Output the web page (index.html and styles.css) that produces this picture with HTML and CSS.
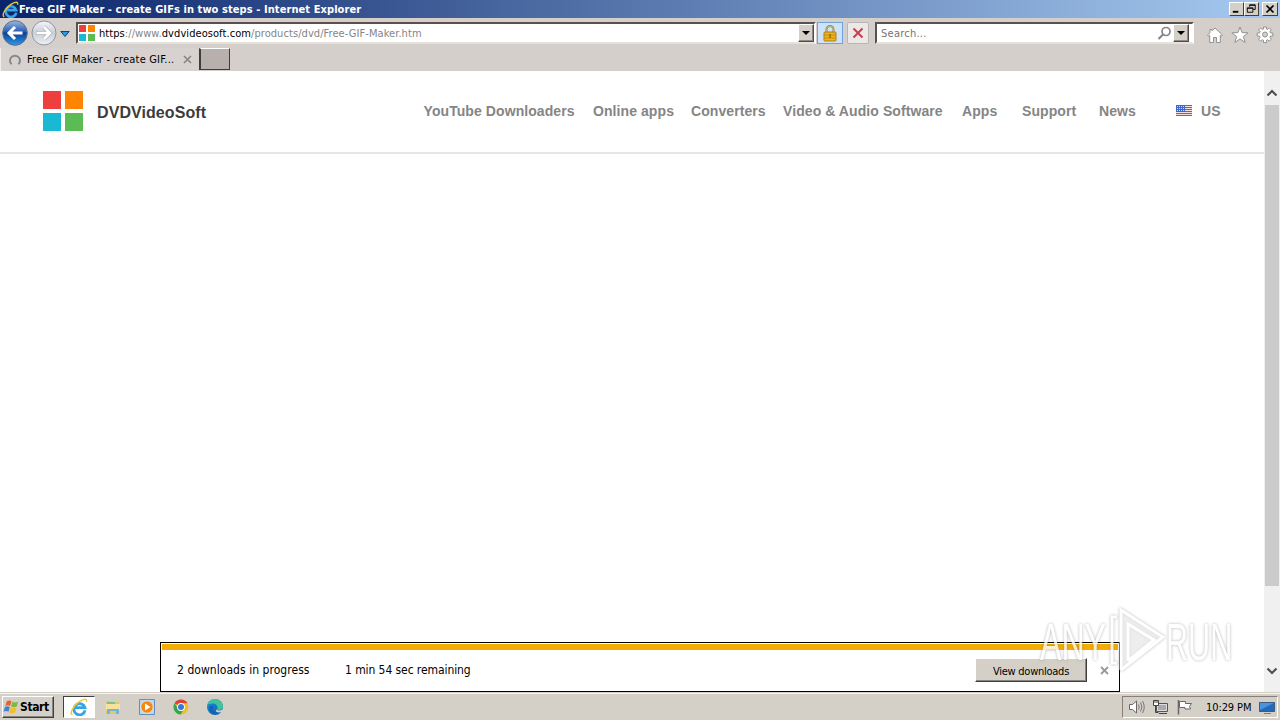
FILE: index.html
```html
<!DOCTYPE html>
<html lang="en">
<head>
<meta charset="utf-8">
<title>Free GIF Maker - create GIFs in two steps</title>
<link rel="stylesheet" href="styles.css">
</head>
<body>
<svg width="0" height="0" class="defs">
  <defs>
    <linearGradient id="blue" x1="0" y1="0" x2="0" y2="1"><stop offset="0" stop-color="#9db9df"/><stop offset=".42" stop-color="#2f63b5"/><stop offset=".5" stop-color="#0c3f98"/><stop offset="1" stop-color="#2f9be6"/></linearGradient>
    <linearGradient id="pale" x1="0" y1="0" x2="0" y2="1"><stop offset="0" stop-color="#f4f5f8"/><stop offset=".5" stop-color="#c9ced8"/><stop offset="1" stop-color="#eef1f5"/></linearGradient>
    <linearGradient id="edgeg" x1="0" y1="0" x2="1" y2="1"><stop offset="0" stop-color="#1c8fdc"/><stop offset="1" stop-color="#0b5cad"/></linearGradient>
    <symbol id="ie" viewBox="0 0 16 16">
      <path d="M13.400 11A5 5 0 1 1 13.300 8.600H5" fill="none" stroke="#38a4e4" stroke-width="2.500"/>
      <path d="M2.200 14.800C-.8 14.500 2.500 7.200 8 3.400 12.500.3 15.600.4 14.600 3.600" fill="none" stroke="#f3c52f" stroke-width="1.300"/>
    </symbol>
  </defs>
</svg>
<div class="window">
  <header class="titlebar">
    <svg class="title-icon" width="17" height="17"><use href="#ie"/></svg>
    <span class="title-text">Free GIF Maker - create GIFs in two steps - Internet Explorer</span>
    <div class="win-buttons">
      <svg class="wb" viewBox="0 0 14 12"><path d="M3 9h6" stroke="#000" stroke-width="2"/></svg>
      <svg class="wb" viewBox="0 0 14 12"><path d="M5 3.500v-2h6v5H9M5 2h6M2.500 5v4.500h6V5zM2 5h7" fill="none" stroke="#000"/></svg>
      <svg class="wb last" viewBox="0 0 14 12"><path d="M3.500 2.500l7 7m0-7l-7 7" stroke="#000" stroke-width="1.700"/></svg>
    </div>
  </header>

  <div class="toolbar">
    <svg class="back" width="26" height="26" viewBox="0 0 26 26"><circle cx="13" cy="13" r="12.300" fill="url(#blue)" stroke="#5b6f92"/><path d="M20.500 13H7m6-6l-6 6 6 6" fill="none" stroke="#fff" stroke-width="3"/></svg>
    <svg class="forward" width="26" height="26" viewBox="0 0 26 26"><circle cx="13" cy="13" r="12" fill="url(#pale)" stroke="#8e94a0"/><path d="M5 13h14m-6-6l6 6-6 6" fill="none" stroke="#aeb2ba" stroke-width="4"/><path d="M5.500 13H19m-6-6l6 6-6 6" fill="none" stroke="#fff" stroke-width="2.600"/></svg>
    <svg class="history" width="10" height="8" viewBox="0 0 10 8"><path d="M.8 1.500h8.400L5 6.500z" fill="#2b9be0" stroke="#17416f"/></svg>
    <div class="address">
      <div class="favicon"><i class="red"></i><i class="orange"></i><i class="cyan"></i><i class="green"></i></div>
      <span class="url"><b>https</b>://www.<b>dvdvideosoft.com</b>/products/dvd/Free-GIF-Maker.htm</span>
      <div class="drop"></div>
    </div>
    <div class="lock"><svg width="14" height="17" viewBox="0 0 14 17"><path d="M3.500 8V4.500a3.500 3.500 0 0 1 7 0V8" fill="none" stroke="#8d8147" stroke-width="2"/><path d="M3.500 7V4.500a3.500 3.500 0 0 1 7 0V7" fill="none" stroke="#d8cf9a" stroke-width=".7"/><rect x="1" y="7" width="12" height="9" rx="1" fill="#edb51c" stroke="#ae7c12"/><path d="M1.500 10h11m-11 3h11" stroke="#c78a0d"/><path d="M7 9v4" stroke="#875d08" stroke-width="1.200"/></svg></div>
    <div class="stop"><svg width="12" height="12" viewBox="0 0 12 12"><path d="M1.500 1.500L10.500 10.500M10.500 1.500L1.500 10.500" stroke="#c6424b" stroke-width="2"/></svg></div>
    <div class="search"><span>Search...</span>
      <svg width="15" height="15" viewBox="0 0 15 15"><circle cx="9" cy="5.500" r="4" fill="none" stroke="#85858a" stroke-width="1.700"/><path d="M6 8.500L1.500 13" stroke="#85858a" stroke-width="2.200"/></svg>
      <div class="drop"></div>
    </div>
    <div class="tools">
      <svg width="18" height="18" viewBox="0 0 18 18"><path d="M9 2l7.500 7-1 1.200-1.200-1V16.500h-3.800v-5h-3v5H3.700V9.200l-1.200 1L1.500 9 4 6.700V3.500h2v1.300z" fill="#fff" stroke="#929292"/></svg>
      <svg width="18" height="18" viewBox="0 0 18 18"><path d="M9 1l2.100 5.600 6 .2-4.700 3.700 1.700 5.900L9 13l-5.100 3.400 1.700-5.900L.9 6.800l6-.2z" fill="#fff" stroke="#929292"/></svg>
      <svg width="18" height="18" viewBox="0 0 18 18"><path d="M7.500 1h3v2l1.200.5 1.600-1.600 2 2L13.900 5.600l.6 1.400h2.300v3h-2.300l-.6 1.500 1.500 1.600-2.100 2.100-1.600-1.500-1.200.6v2.300h-3v-2.300l-1.300-.6-1.600 1.500-2-2.100L4.100 11.500 3.500 10H1.200V7h2.300l.6-1.400-1.500-1.700 2-2 1.600 1.600L7.500 3z" fill="#fff" stroke="#929292"/><circle cx="9" cy="8.500" r="2.500" fill="#d4d0c8" stroke="#929292"/></svg>
    </div>
  </div>

  <div class="tabs">
    <div class="tab">
      <svg width="14" height="14" viewBox="0 0 14 14"><path d="M3.600 11.300A5 5 0 1 1 10.400 11.300" fill="none" stroke="#888" stroke-width="2"/></svg>
      <span>Free GIF Maker - create GIF...</span>
      <svg width="9" height="9" viewBox="0 0 9 9"><path d="M1 1l7 7m0-7L1 8" stroke="#858585" stroke-width="1.600"/></svg>
    </div>
    <div class="new-tab"></div>
  </div>

  <div class="viewport">
    <main class="page">
      <div class="site-header">
        <div class="logo"><i class="red"></i><i class="orange"></i><i class="cyan"></i><i class="green"></i></div>
        <span class="brand">DVDVideoSoft</span>
        <nav>
          <a>YouTube Downloaders</a><a>Online apps</a><a>Converters</a><a>Video &amp; Audio Software</a><a>Apps</a><a>Support</a><a>News</a>
          <svg class="flag" width="16" height="11" viewBox="0 0 16 11"><path fill="#f4dede" d="M0 0h16v11H0z"/><path d="M8 .5h8M8 2.500h8M8 4.500h8M0 6.500h16M0 8.500h16M0 10.500h16" stroke="#d3453b" stroke-width="1.100"/><path fill="#3b68c9" d="M0 0h9v7H0z"/><path d="M1 1.500h8M1 3.500h8M1 5.500h8" stroke="#cfdcff" stroke-dasharray="1 1"/></svg>
          <a>US</a>
        </nav>
      </div>
    </main>
    <aside class="scrollbar">
      <svg width="12" height="8" viewBox="0 0 12 8"><path d="M1.500 6.500L6 2l4.500 4.500" fill="none" stroke="#505050" stroke-width="2.200"/></svg>
      <div class="thumb"></div>
      <svg class="down" width="12" height="8" viewBox="0 0 12 8"><path d="M1.500 1.500L6 6l4.500-4.500" fill="none" stroke="#505050" stroke-width="2.200"/></svg>
    </aside>
    <section class="downloads">
      <div class="strip"></div>
      <div class="download-row">
        <span class="count">2 downloads in progress</span>
        <span class="remaining">1 min 54 sec remaining</span>
        <button><span>View downloads</span></button>
        <svg width="9" height="9" viewBox="0 0 9 9"><path d="M1 1l7 7m0-7L1 8" stroke="#999" stroke-width="1.800"/></svg>
      </div>
    </section>
    <svg class="watermark" width="210" height="76" viewBox="0 0 210 76">
      <text transform="translate(6 55.500) scale(.63 1)">ANY</text>
      <text transform="translate(132 55.500) scale(.6 1)">RUN</text>
      <path class="play" d="M87 6L129 33 87 66z"/>
      <path class="lines" d="M83 13h-5v46h5M87 66V6l42 27-42 33M94 57V20l26 16-26 21"/>
    </svg>
  </div>

  <footer class="taskbar">
    <div class="start">
      <svg width="17" height="16" viewBox="0 0 18 16"><path d="M4 2q3-2 5 0L7.500 7Q5 5.500 2.500 7z" fill="#e8602c"/><path d="M10 2.500q3 1.800 6-.2L14.500 7.500q-3 1.500-6 0z" fill="#7eb83d"/><path d="M2 8q3-1.500 5.200.2L5.800 13Q3 11.500.6 13z" fill="#3f83d0"/><path d="M8 8.500q3 1.500 6.200 0L12.700 13.700q-3 1.500-6 0z" fill="#f3bd28"/></svg>
      <span>Start</span>
    </div>
    <div class="task-active"><svg width="18" height="18"><use href="#ie"/></svg></div>
    <div class="pinned">
      <svg width="18" height="18" viewBox="0 0 18 18"><path d="M2 3h5l1 1h7v12H2z" fill="#e5c668"/><path d="M3 4h8v3H3z" fill="#7cc484"/><path d="M2 6h14v6H2z" fill="#f5e39c"/><path d="M3 16v-5h12v5h-3v-3H6v3z" fill="#74b5d5"/></svg>
      <svg width="18" height="18" viewBox="0 0 18 18"><path d="M1.500 1.500h15v15h-15z" fill="#b9d7f0" stroke="#5e91bf"/><circle cx="9" cy="9" r="6.200" fill="#f28716" stroke="#fff" stroke-width=".6"/><path d="M7 5.500v7l5.500-3.500z" fill="#fff"/></svg>
      <svg width="18" height="18" viewBox="0 0 18 18"><circle cx="9" cy="9" r="7.500" fill="#eebf2c"/><path d="M9 9L2.500 5.250A7.500 7.500 0 0 1 15.500 5.250H9z" fill="#df4036"/><path d="M2.500 5.250A7.500 7.500 0 0 0 8.800 16.500L12 10.500H6z" fill="#38a353"/><circle cx="9" cy="9" r="3.900" fill="#fff"/><circle cx="9" cy="9" r="3" fill="#3478dc"/></svg>
      <svg width="18" height="18" viewBox="0 0 18 18"><circle cx="9" cy="9" r="8" fill="url(#edgeg)"/><path d="M1.300 7A8 8 0 0 1 17 8.500c0 3-3 4-6 3 1-1.500.6-5.500-3.500-6C4.500 5.100 2.500 6 1.300 7z" fill="#42c49b"/><path d="M10 11.500q3 2.300 7-.5v2.500q-4 2-7 0z" fill="#d4d0c8"/><path d="M7 8q-2 5 4 8Q4 17 3 10q1-3 4-2z" fill="#1261b3"/></svg>
    </div>
    <div class="tray">
      <svg width="18" height="16" viewBox="0 0 18 16"><path d="M1.500 5.500h3l4-3.500v12l-4-3.500h-3z" fill="#fff" stroke="#666"/><path d="M10.500 5.500q1.500 2.500 0 5m2-7q3 4.500 0 9m2-10.500q3.500 6 0 12" fill="none" stroke="#777"/></svg>
      <svg width="18" height="16" viewBox="0 0 18 16"><path d="M4.500 4.500h11v8h-11z" fill="#ddd" stroke="#555"/><path d="M6 6h8v5H6z" fill="#aaa"/><path d="M7 14.500h8" stroke="#444"/><path d="M1.500 1.500h5v5h-5z" fill="#fff" stroke="#444"/><path d="M3 1v3m2-3v3M3.500 7v6.500h3" fill="none" stroke="#444"/></svg>
      <svg width="18" height="16" viewBox="0 0 18 16"><path d="M2.500 1v14.500" stroke="#666" stroke-width="1.500"/><path d="M3.500 2.500h6v2h6l-2 3 1 2.500H9V8.500H3.500z" fill="#fff" stroke="#666"/></svg>
      <time>10:29 PM</time>
      <svg width="16" height="15" viewBox="0 0 16 15"><path d="M.5 2.500h15v9H.5z" fill="#2968b8" stroke="#385d87"/><path d="M1 3h14L1 10z" fill="#4a93dd"/><path d="M5 13.500h7" stroke="#5f82a5"/></svg>
    </div>
  </footer>
</div>
</body>
</html>
```
FILE: styles.css
```css
* { box-sizing: border-box; }
body { margin: 0; background: #d4cfca; font: 11px "DejaVu Sans Condensed", "DejaVu Sans", sans-serif; color: #000; overflow: hidden; }
svg { display: block; flex: none; }
.defs { position: absolute; }
span, time { white-space: nowrap; }
.window { width: 1280px; height: 720px; display: flex; flex-direction: column; }
.red { background: #ef3e3e; }
.orange { background: #ff8500; }
.cyan { background: #19b9d3; }
.green { background: #5bbb54; }

.titlebar { height: 18px; display: flex; align-items: center; padding: 0 2px; background: linear-gradient(90deg, #0a246a, #a6caf0); color: #fff; }
.title-text { font-weight: bold; letter-spacing: 0.08px; }
.win-buttons { margin-left: auto; display: flex; }
.wb { width: 15px; height: 14px; background: #d4d0c8; border: 1px solid; border-color: #fff #404040 #404040 #fff; }
.wb.last { margin-left: 3px; width: 16px; }

.toolbar { height: 30px; display: flex; align-items: flex-start; padding: 2px 0 0 2px; }
.forward { margin-left: 3px; }
.history { margin: 10px 0 0 3px; }
.address, .search { height: 22px; margin-top: 2px; display: flex; align-items: center; background: #fff; border: 2px solid; border-color: #5a504c #fff #e7e1dc #5a504c; }
.address { width: 740px; margin-left: 6px; }
.favicon { width: 16px; height: 16px; display: grid; grid-template-columns: 7px 7px; grid-template-rows: 7px 7px; gap: 2px; margin-left: 1px; }
.url { margin-left: 4px; color: #858585; letter-spacing: 0.07px; }
.url b { font-weight: normal; color: #000; }
.drop { width: 16px; height: 18px; margin-left: auto; background: #d4d0c8; border: 1px solid; border-color: #fff #504c48 #504c48 #fff; box-shadow: inset -1px -1px #8e8a84; display: flex; align-items: center; justify-content: center; }
.drop::after { content: ""; border: 4px solid transparent; border-top-color: #000; border-bottom: 0; }
.lock { width: 26px; height: 22px; margin: 2px 0 0 1px; display: flex; align-items: center; justify-content: center; background: #cfe2f8; border: 1px solid #6fa3de; }
.stop { width: 22px; height: 22px; margin: 2px 0 0 4px; display: flex; align-items: center; justify-content: center; background: #ebe8e8; border: 1px solid #b9b6b5; border-radius: 2px; }
.search { width: 319px; margin-left: 6px; padding: 0 3px 0 4px; color: #757575; letter-spacing: 0.25px; }
.search svg { margin-left: auto; }
.search .drop { margin-left: 1px; }
.tools { display: flex; gap: 7px; margin: 6px 0 0 12px; }

.tabs { height: 23px; display: flex; }
.tab { width: 198px; height: 23px; display: flex; align-items: center; padding-left: 7px; background: #d7d2cf; border-left: 1px solid #eee; }
.tab span { width: 153px; margin-left: 5px; padding-bottom: 1px; letter-spacing: 0.18px; }
.tab svg:last-child { margin-left: 3px; }
.new-tab { width: 31px; height: 22px; margin-left: 1px; background: #b8b0ad; border: 1px solid #403c3a; border-left-width: 2px; border-top-color: #fff; }

.viewport { position: relative; height: 621px; display: flex; background: #fff; }
.page { width: 1264px; }
.site-header { height: 83px; display: flex; padding: 20px 0 0 43px; border-bottom: 2px solid #e6e6e6; font-family: "Liberation Sans", Arial, sans-serif; font-weight: bold; }
.logo { width: 40px; height: 40px; display: grid; grid-template-columns: 18px 18px; grid-template-rows: 18px 18px; gap: 4px; }
.brand { width: 327px; padding-left: 14px; font-size: 16px; line-height: 43px; letter-spacing: 0.08px; color: #3c3c3c; }
.site-header nav { display: grid; grid-template-columns: 169.500px 98px 92px 179px 60px 77px 77px 25px 40px; margin-left: 13.500px; height: 40px; font-size: 14px; line-height: 40px; letter-spacing: 0.08px; color: #858585; white-space: nowrap; }
.flag { margin-top: 14px; }
.scrollbar { width: 16px; background: #f0f0f0; display: flex; flex-direction: column; align-items: center; padding: 18px 0 17px; }
.thumb { width: 14px; height: 481px; margin-top: 8px; background: #cbcbcb; }
.down { margin-top: auto; }

/* Notification docked over the bottom of the page */
.downloads { position: absolute; left: 160px; bottom: 0; width: 960px; height: 50px; background: #fff; border: 1px solid #000; padding: 1px; }
.strip { height: 6px; background: #f5ad05; }
.download-row { height: 40px; display: flex; align-items: center; padding-left: 15px; font-size: 12px; }
.count { width: 168px; letter-spacing: 0.05px; }
.remaining { width: 630px; letter-spacing: -0.08px; }
.downloads button { width: 112px; height: 24px; padding: 2px 0 0; background: #d4d0c8; border: 1px solid; border-color: #fff #404040 #404040 #fff; box-shadow: inset -1px -1px #88847f; font: 11px "DejaVu Sans Condensed", sans-serif; letter-spacing: -0.25px; color: #000; }
.download-row svg { margin-left: 13px; }
.watermark { position: absolute; left: 1034px; top: 533px; overflow: visible; font: 51px "Liberation Sans", sans-serif; fill: #fff; opacity: .8; filter: drop-shadow(0 0 1.500px rgba(90, 90, 90, .55)); }
.play { fill: #fff; fill-opacity: .55; }
.lines { fill: none; stroke: #fff; stroke-width: 3; }

.taskbar { height: 28px; display: flex; align-items: flex-start; background: #d4d0c8; border-top: 1px solid #d4d0c8; box-shadow: inset 0 1px #f6f4ef; padding: 3px 2px 0; }
.start { width: 52px; height: 22px; display: flex; align-items: center; border: 1px solid; border-color: #fff #404040 #404040 #fff; box-shadow: inset -1px -1px #88847f; font-weight: bold; font-size: 12px; letter-spacing: -0.4px; }
.task-active { width: 32px; height: 22px; margin-left: 9px; background: #fff; border: 1px solid; border-color: #404040 #fff #fff #404040; display: flex; align-items: center; justify-content: center; }
.pinned { display: flex; gap: 16px; margin: 2px 0 0 9px; }
.tray { width: 156px; height: 22px; margin-left: auto; display: flex; align-items: center; padding-left: 5px; border: 1px solid; border-color: #858079 #fff #fff #858079; }
.tray svg + svg { margin-left: 6px; }
.tray time { width: 49px; margin-left: 12px; letter-spacing: -0.1px; }
.tray time + svg { margin-left: 4px; }
```
